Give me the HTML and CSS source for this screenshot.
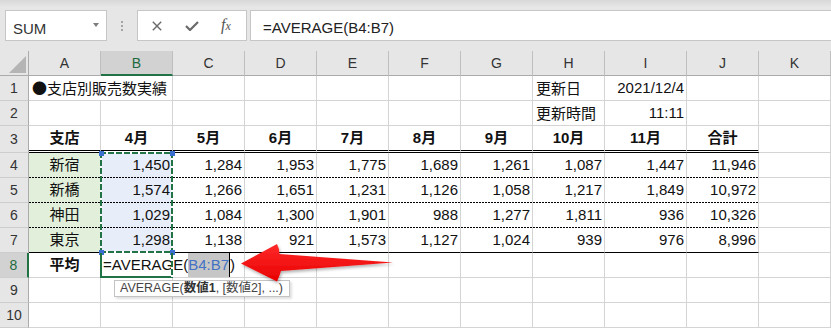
FILE: index.html
```html
<!DOCTYPE html>
<html lang="ja">
<head>
<meta charset="utf-8">
<title>Excel AVERAGE</title>
<link rel="stylesheet" href="styles.css">
</head>
<body>
<div class="app">
  <div class="toolbar">
    <div class="namebox"><span class="nb-text">SUM</span><span class="nb-caret"></span></div>
    <div class="grip"><i></i><i></i><i></i></div>
    <div class="fbtns">
      <svg class="ic-x" width="10" height="10" viewBox="0 0 10 10"><path d="M0.8 0.8 L9.2 9.2 M9.2 0.8 L0.8 9.2" stroke="#6a6a6a" stroke-width="1.4" fill="none"/></svg>
      <svg class="ic-ok" width="14" height="10" viewBox="0 0 14 10"><path d="M1 5 L5 9 L13 1" stroke="#6a6a6a" stroke-width="2.2" fill="none" stroke-linejoin="miter"/></svg>
      <span class="fx">f<span class="fx-x">x</span></span>
    </div>
    <div class="finput">=AVERAGE(B4:B7)</div>
  </div>

  <div class="sheetwrap">
    <div class="sheet">
      <div class="corner"><span class="tri"></span></div>
      <div class="ch">A</div><div class="ch sel">B</div><div class="ch">C</div><div class="ch">D</div><div class="ch">E</div><div class="ch">F</div><div class="ch">G</div><div class="ch">H</div><div class="ch">I</div><div class="ch">J</div><div class="ch">K</div>

      <div class="rh">1</div>
      <div class="c jp span2">●支店別販売数実績</div><div class="c"></div><div class="c"></div><div class="c"></div><div class="c"></div><div class="c"></div>
      <div class="c jp">更新日</div><div class="c r">2021/12/4</div><div class="c"></div><div class="c"></div>

      <div class="rh">2</div>
      <div class="c"></div><div class="c"></div><div class="c"></div><div class="c"></div><div class="c"></div><div class="c"></div><div class="c"></div>
      <div class="c jp">更新時間</div><div class="c r">11:11</div><div class="c"></div><div class="c"></div>

      <div class="rh tall">3</div>
      <div class="c hd">支店</div><div class="c hd">4月</div><div class="c hd">5月</div><div class="c hd">6月</div><div class="c hd">7月</div><div class="c hd">8月</div><div class="c hd">9月</div><div class="c hd">10月</div><div class="c hd">11月</div><div class="c hd">合計</div><div class="c"></div>

      <div class="rh">4</div>
      <div class="c ctr ga dot">新宿</div><div class="c r bl dot">1,450</div><div class="c r dot">1,284</div><div class="c r dot">1,953</div><div class="c r dot">1,775</div><div class="c r dot">1,689</div><div class="c r dot">1,261</div><div class="c r dot">1,087</div><div class="c r dot">1,447</div><div class="c r dot">11,946</div><div class="c"></div>

      <div class="rh">5</div>
      <div class="c ctr ga dot">新橋</div><div class="c r bl dot">1,574</div><div class="c r dot">1,266</div><div class="c r dot">1,651</div><div class="c r dot">1,231</div><div class="c r dot">1,126</div><div class="c r dot">1,058</div><div class="c r dot">1,217</div><div class="c r dot">1,849</div><div class="c r dot">10,972</div><div class="c"></div>

      <div class="rh">6</div>
      <div class="c ctr ga dot">神田</div><div class="c r bl dot">1,029</div><div class="c r dot">1,084</div><div class="c r dot">1,300</div><div class="c r dot">1,901</div><div class="c r dot">988</div><div class="c r dot">1,277</div><div class="c r dot">1,811</div><div class="c r dot">936</div><div class="c r dot">10,326</div><div class="c"></div>

      <div class="rh">7</div>
      <div class="c ctr ga sol">東京</div><div class="c r bl sol">1,298</div><div class="c r sol">1,138</div><div class="c r sol">921</div><div class="c r sol">1,573</div><div class="c r sol">1,127</div><div class="c r sol">1,024</div><div class="c r sol">939</div><div class="c r sol">976</div><div class="c r sol">8,996</div><div class="c"></div>

      <div class="rh sel">8</div>
      <div class="c ctr b">平均</div>
      <div class="c span2 edit">=AVERAGE(<span class="ref">B4:B7</span><span class="caret"></span>)</div>
      <div class="c"></div><div class="c"></div><div class="c"></div><div class="c"></div><div class="c"></div><div class="c"></div><div class="c"></div><div class="c"></div>

      <div class="rh">9</div>
      <div class="c"></div><div class="c"></div><div class="c"></div><div class="c"></div><div class="c"></div><div class="c"></div><div class="c"></div><div class="c"></div><div class="c"></div><div class="c"></div><div class="c"></div>

      <div class="rh">10</div>
      <div class="c"></div><div class="c"></div><div class="c"></div><div class="c"></div><div class="c"></div><div class="c"></div><div class="c"></div><div class="c"></div><div class="c"></div><div class="c"></div><div class="c"></div>
    </div>

    <div class="sheet overlay">
      <div class="range">
        <i class="e et"></i><i class="e eb"></i><i class="e el"></i><i class="e er"></i>
        <b class="h htl"></b><b class="h htr"></b><b class="h hbl"></b><b class="h hbr"></b>
      </div>
      <div class="active"><i class="e er"></i></div>
    </div>
  </div>

  <div class="tip">AVERAGE(<b>数値1</b>, [数値2], ...)</div>

  <svg class="arrow" width="831" height="328" viewBox="0 0 831 328">
    <defs>
      <linearGradient id="ag" x1="0" y1="0" x2="0" y2="1">
        <stop offset="0" stop-color="#ff2a2a"/>
        <stop offset="1" stop-color="#e80000"/>
      </linearGradient>
      <filter id="sh" x="-10%" y="-30%" width="130%" height="180%">
        <feDropShadow dx="1" dy="2" stdDeviation="1.5" flood-color="#000" flood-opacity="0.3"/>
      </filter>
    </defs>
    <path d="M241 263.5 L277 244 Q279.5 249 279.5 254 L393 262.5 L281 271 Q279.5 276 277 281.5 Z" fill="url(#ag)" filter="url(#sh)"/>
  </svg>
</div>
</body>
</html>
```

FILE: styles.css
```css
html, body {
  margin: 0;
  padding: 0;
  background: #fff;
}

body {
  font-family: "Liberation Sans", "Noto Sans CJK JP", sans-serif;
  color: #000;
}

.app {
  position: relative;
  width: 831px;
  height: 328px;
  overflow: hidden;
}

/* ---------- formula bar ---------- */
.toolbar {
  height: 51px;
  box-sizing: border-box;
  padding-top: 10px;
  display: flex;
  align-items: flex-start;
  background: linear-gradient(#d8d8d8, #e6e6e6 7px);
}

.namebox {
  margin-left: 5px;
  width: 102px;
  height: 31px;
  box-sizing: border-box;
  border: 1px solid #c6c6c6;
  background: #fff;
  display: flex;
  align-items: center;
  justify-content: space-between;
  padding: 0 7px 0 7px;
}

.nb-text {
  font-size: 15px;
  line-height: 15px;
  padding-top: 5px;
  color: #333;
}

.nb-caret {
  width: 0;
  height: 0;
  border-left: 3px solid transparent;
  border-right: 3px solid transparent;
  border-top: 4px solid #7d7d7d;
  margin-top: -1px;
}

.grip {
  width: 30px;
  height: 31px;
  display: flex;
  flex-direction: column;
  align-items: center;
  justify-content: center;
  gap: 2px;
}

.grip i {
  display: block;
  width: 2px;
  height: 2px;
  background: #a4a4a4;
}

.fbtns {
  width: 110px;
  height: 31px;
  box-sizing: border-box;
  border: 1px solid #c6c6c6;
  background: #fff;
  display: flex;
  align-items: center;
  padding-left: 14px;
}

.ic-ok {
  margin-left: 23px;
  margin-top: 1px;
}

.fx {
  margin-left: 22px;
  font-family: "Liberation Serif", serif;
  font-style: italic;
  font-size: 16px;
  color: #555;
  line-height: 16px;
}

.fx-x {
  font-size: 12px;
}

.finput {
  flex: 1;
  margin-left: 3px;
  height: 31px;
  box-sizing: border-box;
  border: 1px solid #c6c6c6;
  border-right: none;
  background: #fff;
  padding: 3px 0 0 12px;
  font-size: 15px;
  line-height: 28px;
  color: #222;
  white-space: nowrap;
}

/* ---------- sheet grid ---------- */
.sheetwrap {
  position: relative;
}

.sheet {
  display: grid;
  grid-template-columns: 29px repeat(8, 72px) 82px 72px 72px;
  grid-template-rows: 25px 25px 25px 27px repeat(7, 25px);
}

.overlay {
  position: absolute;
  left: 0;
  top: 0;
  right: 0;
  bottom: 0;
  pointer-events: none;
}

.corner {
  background: #e6e6e6;
  border-right: 1px solid #ababab;
  border-bottom: 1px solid #ababab;
  box-sizing: border-box;
  display: flex;
  justify-content: flex-end;
  align-items: flex-end;
  padding: 0 2px 2px 0;
}

.tri {
  width: 0;
  height: 0;
  border-left: 17px solid transparent;
  border-bottom: 17px solid #b5b5b5;
}

.ch {
  background: #e6e6e6;
  border-right: 1px solid #bfbfbf;
  border-bottom: 1px solid #ababab;
  box-sizing: border-box;
  text-align: center;
  font-size: 14px;
  line-height: 24px;
  color: #333;
}

.ch.sel {
  background: #d2d2d2;
  border-bottom: 2px solid #217346;
  color: #1e6b3f;
}

.rh {
  background: #e6e6e6;
  border-right: 1px solid #ababab;
  border-bottom: 1px solid #cdcdcd;
  box-sizing: border-box;
  text-align: center;
  font-size: 14px;
  line-height: 24px;
  color: #333;
}

.rh.tall {
  line-height: 26px;
}

.rh.sel {
  background: #d2d2d2;
  border-right: 2px solid #217346;
  color: #1e6b3f;
}

.c {
  border-right: 1px solid #d4d4d4;
  border-bottom: 1px solid #d4d4d4;
  box-sizing: border-box;
  padding: 0 3px;
  font-size: 15px;
  line-height: 24px;
  white-space: nowrap;
  color: #111;
}

.jp {
  font-family: "Noto Sans CJK JP", sans-serif;
}

.span2 {
  grid-column: span 2;
}

.r {
  text-align: right;
  padding-right: 2px;
}

.ctr {
  text-align: center;
}

.b {
  font-weight: bold;
}

.hd {
  font-weight: bold;
  text-align: center;
  border-bottom: 3px double #000;
}

.ga {
  background-color: #e2efda;
}

.bl {
  background-color: #e8eef9;
}

.dot {
  border-bottom-color: transparent;
  background-image: repeating-linear-gradient(90deg, #000 0 2px, transparent 2px 3px);
  background-size: 100% 1px;
  background-position: left bottom;
  background-repeat: no-repeat;
  background-origin: border-box;
}

.sol {
  border-bottom-color: #000;
}

.edit {
  padding-left: 2px;
}

.ref {
  display: inline-block;
  height: 24px;
  vertical-align: top;
  background: #c6c6c6;
  color: #4472c4;
}

.caret {
  display: inline-block;
  width: 1px;
  height: 24px;
  vertical-align: top;
  background: #000;
}

/* ---------- reference range / active cell overlays ---------- */
.range {
  grid-column: 3;
  grid-row: 5 / 9;
  position: relative;
  margin: -1px 0 0 -1px;
}

.active {
  grid-column: 3;
  grid-row: 9;
  position: relative;
  margin-left: -1px;
  border-left: 2px solid #217346;
  border-bottom: 2px solid #217346;
}

.e {
  position: absolute;
  display: block;
}

.et, .eb {
  left: 0;
  right: 0;
  height: 2px;
  background: repeating-linear-gradient(90deg, #217346 0 6px, #fff 6px 8px);
}

.et { top: 0; }
.eb { bottom: 0; }

.el, .er {
  top: 0;
  bottom: 0;
  width: 2px;
  background: repeating-linear-gradient(180deg, #217346 0 6px, #fff 6px 8px);
}

.el { left: 0; }
.er { right: 0; }

.active .er {
  bottom: -2px;
}

.h {
  position: absolute;
  width: 5px;
  height: 5px;
  background: #3a6fcf;
  display: block;
}

.htl { left: -1.5px; top: -1.5px; }
.htr { right: -1.5px; top: -1.5px; }
.hbl { left: -1.5px; bottom: -1.5px; }
.hbr { right: -1.5px; bottom: -1.5px; }

/* ---------- tooltip ---------- */
.tip {
  position: absolute;
  left: 114px;
  top: 280px;
  height: 17px;
  box-sizing: border-box;
  border: 1px solid #c3c3c3;
  background: #fff;
  box-shadow: 2px 2px 2px rgba(0, 0, 0, 0.12);
  padding: 0 6px 0 5px;
  font-size: 12.5px;
  line-height: 15px;
  color: #444;
  white-space: nowrap;
}

.tip b {
  color: #333;
}

/* ---------- arrow ---------- */
.arrow {
  position: absolute;
  left: 0;
  top: 0;
  pointer-events: none;
}
```
